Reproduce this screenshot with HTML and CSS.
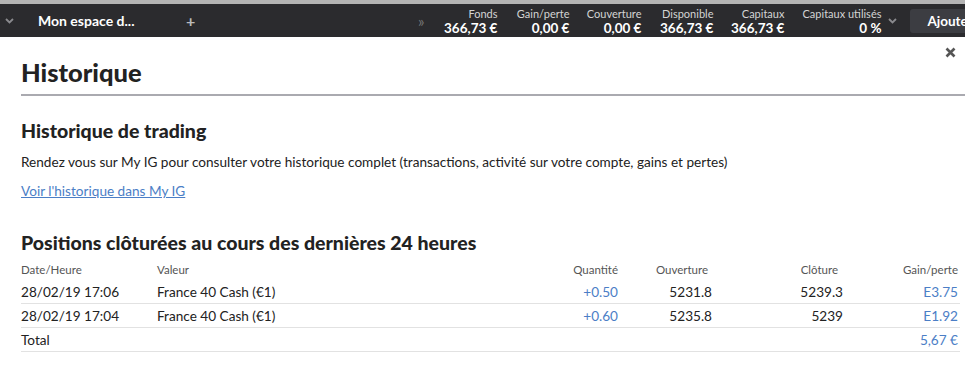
FILE: index.html
```html
<!DOCTYPE html>
<html lang="fr">
<head>
    <meta charset="UTF-8">
    <title>Historique</title>
    <link rel="stylesheet" href="styles.css">
</head>
<body>

<div class="topbar">
    <div class="tab">
        <span class="tab-arrow">
            <svg width="9" height="6" viewBox="0 0 9 6"><path d="M1 1l3.5 3.5L8 1" fill="none" stroke="#8a8a8e" stroke-width="1.8"/></svg>
        </span>
        <span class="tab-name">Mon espace d...</span>
        <span class="tab-plus">+</span>
    </div>
    <div class="stats">
        <span class="more">&raquo;</span>
        <div class="stat"><span class="stat-label">Fonds</span><span class="stat-value">366,73 €</span></div>
        <div class="stat"><span class="stat-label">Gain/perte</span><span class="stat-value">0,00 €</span></div>
        <div class="stat"><span class="stat-label">Couverture</span><span class="stat-value">0,00 €</span></div>
        <div class="stat"><span class="stat-label">Disponible</span><span class="stat-value">366,73 €</span></div>
        <div class="stat"><span class="stat-label">Capitaux</span><span class="stat-value">366,73 €</span></div>
        <div class="stat"><span class="stat-label">Capitaux utilisés</span><span class="stat-value">0 %</span></div>
        <span class="stat-arrow">
            <svg width="9" height="6" viewBox="0 0 9 6"><path d="M1 1l3.5 3.5L8 1" fill="none" stroke="#8a8a8e" stroke-width="1.8"/></svg>
        </span>
        <button class="add-btn">Ajouter</button>
    </div>
</div>

<div class="panel">
    <div class="panel-head">
        <h1>Historique</h1>
        <span class="close">
            <svg width="11" height="11" viewBox="0 0 11 11"><path d="M1.5 1.5l8 8M9.5 1.5l-8 8" stroke="#555" stroke-width="2.6"/></svg>
        </span>
    </div>

    <h2>Historique de trading</h2>
    <p class="intro">Rendez vous sur My IG pour consulter votre historique complet (transactions, activité sur votre compte, gains et pertes)</p>
    <a class="link" href="#">Voir l'historique dans My IG</a>

    <h2 class="positions-title">Positions clôturées au cours des dernières 24 heures</h2>
    <table class="positions">
        <colgroup>
            <col class="c-date"><col class="c-val"><col class="c-qty"><col class="c-open"><col class="c-close"><col class="c-pl">
        </colgroup>
        <thead>
            <tr>
                <th>Date/Heure</th>
                <th>Valeur</th>
                <th class="num">Quantité</th>
                <th class="num open-h">Ouverture</th>
                <th class="num close-h">Clôture</th>
                <th class="num">Gain/perte</th>
            </tr>
        </thead>
        <tbody>
            <tr>
                <td>28/02/19 17:06</td>
                <td>France 40 Cash (€1)</td>
                <td class="num blue">+0.50</td>
                <td class="num">5231.8</td>
                <td class="num">5239.3</td>
                <td class="num blue">E3.75</td>
            </tr>
            <tr>
                <td>28/02/19 17:04</td>
                <td>France 40 Cash (€1)</td>
                <td class="num blue">+0.60</td>
                <td class="num">5235.8</td>
                <td class="num">5239</td>
                <td class="num blue">E1.92</td>
            </tr>
            <tr>
                <td>Total</td>
                <td></td>
                <td></td>
                <td></td>
                <td></td>
                <td class="num blue">5,67 €</td>
            </tr>
        </tbody>
    </table>
</div>

</body>
</html>
```

FILE: styles.css
```css
body {
    margin: 0;
    font-family: Lato, "Noto Sans", Arial, sans-serif;
    color: #222;
    background: #fff;
    overflow: hidden;
}
.topbar {
    display: flex;
    align-items: center;
    height: 33px;
    background-color: #2b2b2e;
    border-top: 4px solid #b4b4b4;
    white-space: nowrap;
    overflow: hidden;
}
.tab {
    display: flex;
    align-items: center;
    width: 215px;
    flex: none;
}
.tab-arrow {
    display: flex;
    margin-left: 5px;
    width: 33px;
}
.tab-name {
    color: #fff;
    font-weight: bold;
    font-size: 14px;
    width: 148px;
}
.tab-plus {
    color: #bbb;
    font-size: 16px;
    font-weight: bold;
}
.stats {
    display: flex;
    align-items: center;
    flex: 1;
}
.more {
    color: #777;
    font-size: 15px;
    margin-left: 203px;
    margin-right: 14px;
}
.stat {
    display: flex;
    flex-direction: column;
    align-items: flex-end;
    margin-right: 13px;
    line-height: 14px;
}
.stat:nth-of-type(1) { width: 59px; }
.stat:nth-of-type(2) { width: 59px; }
.stat:nth-of-type(3) { width: 59px; }
.stat:nth-of-type(4) { width: 59px; }
.stat:nth-of-type(5) { width: 58px; margin-right: 13px; }
.stat:nth-of-type(6) { width: 84px; margin-right: 7px; }
.stat-label {
    color: #d4d4d4;
    font-size: 11px;
}
.stat-value {
    color: #fff;
    font-size: 13.5px;
    font-weight: bold;
}
.stat-arrow {
    display: flex;
    margin-right: 13px;
}
.add-btn {
    flex: none;
    height: 24px;
    padding: 0 17px;
    border: none;
    border-radius: 3px;
    background-color: #3c3d42;
    color: #fff;
    font-family: inherit;
    font-size: 13.5px;
    font-weight: bold;
}
.panel {
    padding: 0 5px 0 21px;
}
.panel-head {
    display: flex;
    justify-content: space-between;
    align-items: flex-start;
    border-bottom: 2px solid #aaaab0;
    margin-right: -5px;
    height: 57px;
}
h1 {
    margin: 20px 0 0;
    font-size: 25.5px;
    font-weight: 900;
    line-height: 30px;
    color: #222;
}
.close {
    display: flex;
    margin: 10px 9px 0 0;
}
h2 {
    margin: 24px 0 0;
    font-size: 19.5px;
    font-weight: 900;
    line-height: 22px;
    color: #222;
}
.intro {
    margin: 11px 0 0;
    font-size: 13.6px;
    line-height: 18px;
}
.link {
    display: inline-block;
    margin-top: 11px;
    font-size: 13.6px;
    line-height: 18px;
    color: #4b7ec6;
}
.positions-title {
    margin-top: 32px;
}
.positions {
    width: 100%;
    margin-top: 4px;
    border-collapse: collapse;
    table-layout: fixed;
    font-size: 13.6px;
}
.c-date { width: 136px; }
.c-val { width: 330px; }
.c-qty { width: 133px; }
.c-open { width: 94px; }
.c-close { width: 131px; }
.c-pl { width: 115px; }
.positions th {
    font-size: 11.5px;
    font-weight: normal;
    color: #555;
    text-align: left;
    height: 22px;
    padding: 0;
}
.positions td {
    height: 23px;
    padding: 0;
    border-bottom: 1px solid #e2e2e2;
}
.positions .num {
    text-align: right;
    padding-right: 2px;
}
.positions th.open-h {
    padding-right: 6px;
}
.positions th.close-h {
    padding-right: 7px;
}
.blue {
    color: #4b7ec6;
}
```
